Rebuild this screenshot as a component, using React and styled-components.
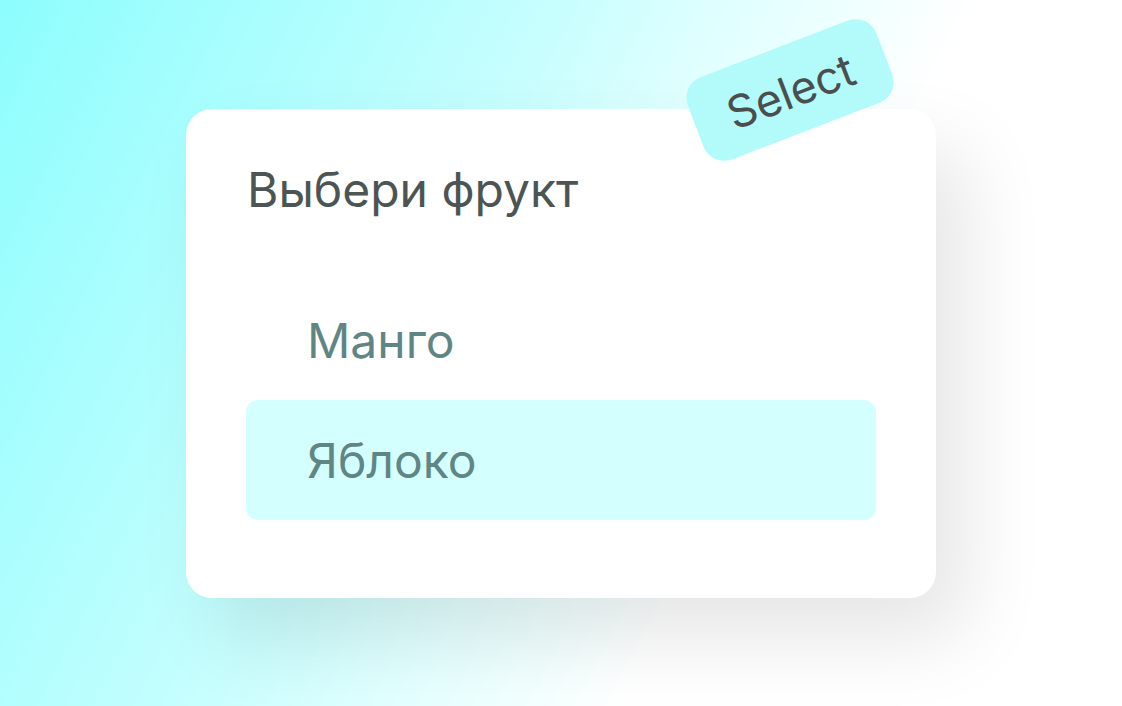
import React from "react";
import styled, { createGlobalStyle } from "styled-components";

const GlobalStyle = createGlobalStyle`
  html, body {
    margin: 0;
    padding: 0;
  }
  body {
    font-family: Inter, "Noto Sans", sans-serif;
  }
  * { box-sizing: border-box; }
`;

const Stage = styled.div`
  width: 1122px;
  height: 706px;
  overflow: hidden;
  background: linear-gradient(
    117deg,
    #8dfdfd 0%,
    #b2fefe 24%,
    #c8fefe 38%,
    #e3ffff 51%,
    #ffffff 66%
  );
  display: flex;
  align-items: flex-start;
  padding: 109px 0 0 186px;
`;

const Card = styled.div`
  position: relative;
  width: 750px;
  height: 489px;
  background: #ffffff;
  border-radius: 26px;
  box-shadow: 30px 40px 80px rgba(0, 0, 0, 0.1);
  padding: 52px 60px 0 60px;
  display: flex;
  flex-direction: column;
`;

const Title = styled.div`
  font-size: 48px;
  line-height: 58px;
  color: #4c5553;
  font-weight: 400;
  padding-left: 1px;
`;

const List = styled.div`
  margin-top: 61px;
  display: flex;
  flex-direction: column;
`;

const Option = styled.div`
  height: 120px;
  display: flex;
  align-items: center;
  padding-left: 61px;
  border-radius: 12px;
  font-size: 48px;
  color: #5f8584;
  background: ${(p) => (p.$active ? "#d4ffff" : "transparent")};
`;

const Badge = styled.div`
  position: absolute;
  left: 503px;
  top: -63px;
  width: 202px;
  height: 88px;
  border-radius: 22px;
  background: #b3fbfb;
  color: #4a4f4e;
  font-size: 45px;
  display: flex;
  align-items: center;
  justify-content: center;
  padding-top: 2px;
  transform: rotate(-21deg);
`;

export default function App() {
  return (
    <>
      <GlobalStyle />
      <Stage>
        <Card>
          <Badge>Select</Badge>
          <Title>Выбери фрукт</Title>
          <List>
            <Option>Манго</Option>
            <Option $active>Яблоко</Option>
          </List>
        </Card>
      </Stage>
    </>
  );
}
